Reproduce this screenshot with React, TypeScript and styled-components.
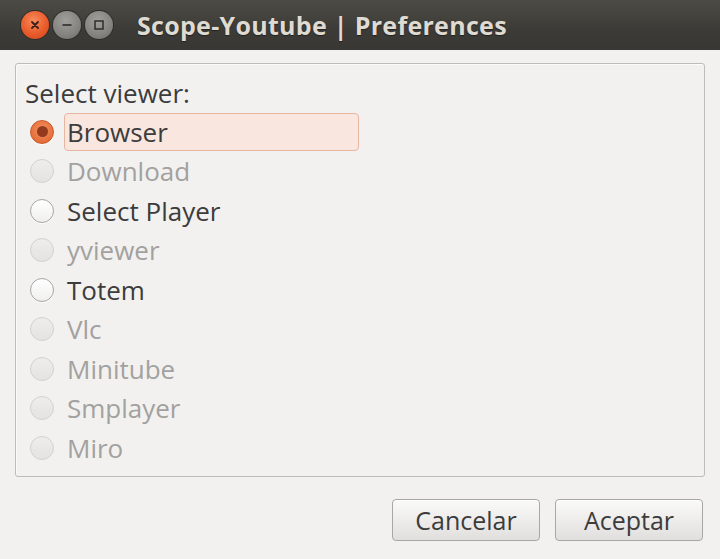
import styled, { createGlobalStyle } from 'styled-components';

const GlobalStyle = createGlobalStyle`
  html, body {
    margin: 0;
    padding: 0;
    background: #f2f1f0;
  }
  body {
    font-family: 'Open Sans', 'Noto Sans', sans-serif;
  }
`;

const Window = styled.div`
  width: 720px;
  height: 559px;
  display: flex;
  flex-direction: column;
  background: #f2f1f0;
  overflow: hidden;
`;

const TitleBar = styled.div`
  height: 50px;
  flex-shrink: 0;
  display: flex;
  align-items: center;
  padding-left: 21px;
  background: linear-gradient(#4c4b46, #3c3b37 60%, #383733);
  box-sizing: border-box;
`;

const WinButtons = styled.div`
  display: flex;
  align-items: center;
  gap: 4px;
`;

const WinButton = styled.div<{ $close?: boolean }>`
  width: 28px;
  height: 28px;
  border-radius: 50%;
  display: flex;
  align-items: center;
  justify-content: center;
  background: ${(p) =>
    p.$close
      ? 'radial-gradient(circle at 45% 35%, #f88a5c, #e95b2a 55%, #c8451c)'
      : 'radial-gradient(circle at 45% 35%, #a19f9a, #858380 60%, #6b6966)'};
  box-shadow: 0 0 0 1px #2d2c29;
`;

const Title = styled.div`
  margin-left: 24px;
  font-size: 25px;
  font-weight: 700;
  color: #dfdbd2;
  letter-spacing: 0.3px;
  text-shadow: 0 1px 1px #222;
`;

const Body = styled.div`
  flex: 1;
  display: flex;
  flex-direction: column;
  padding: 13px 15px 0 15px;
`;

const Frame = styled.div`
  border: 1px solid #bdbcb9;
  border-radius: 3px;
  box-shadow: inset 1px 1px 0 #fbfbfa;
  padding: 14px 0 9px 9px;
  height: 414px;
  box-sizing: border-box;
`;

const Heading = styled.div`
  font-size: 26px;
  line-height: 30px;
  color: #3c3c3c;
`;

const List = styled.div`
  margin-top: 4px;
  display: flex;
  flex-direction: column;
`;

const Row = styled.div`
  height: 39.5px;
  display: flex;
  align-items: center;
  padding-left: 5px;
`;

const Radio = styled.div<{ $checked?: boolean; $disabled?: boolean }>`
  width: 24px;
  height: 24px;
  box-sizing: border-box;
  border-radius: 50%;
  flex-shrink: 0;
  display: flex;
  align-items: center;
  justify-content: center;
  border: 1px solid
    ${(p) => (p.$checked ? '#c9592a' : p.$disabled ? '#d2d1ce' : '#a7a6a3')};
  background: ${(p) =>
    p.$checked
      ? 'radial-gradient(circle at 50% 40%, #f4915f, #e46f3b 70%, #d3602f)'
      : p.$disabled
        ? 'linear-gradient(#eeedec, #e4e3e1)'
        : 'linear-gradient(#ffffff, #f0efee)'};
  box-shadow: ${(p) => (p.$disabled ? 'none' : '0 1px 0 #fbfbfa')};
`;

const Dot = styled.div`
  width: 11px;
  height: 11px;
  border-radius: 50%;
  background: #93391e;
`;

const Label = styled.div<{ $focused?: boolean; $disabled?: boolean }>`
  margin-left: 10px;
  height: 38px;
  box-sizing: border-box;
  display: flex;
  align-items: center;
  padding-left: 2px;
  width: 295px;
  border: 1px solid ${(p) => (p.$focused ? '#e6b6a1' : 'transparent')};
  border-radius: 4px;
  background: ${(p) => (p.$focused ? '#f9e6df' : 'transparent')};
  font-size: 26px;
  color: ${(p) => (p.$disabled ? '#a2a19f' : '#3c3c3c')};
`;

const Footer = styled.div`
  display: flex;
  justify-content: flex-end;
  gap: 15px;
  padding: 22px 2px 0 0;
`;

const Button = styled.button`
  width: 148px;
  height: 42px;
  border: 1px solid #a8a7a4;
  border-radius: 4px;
  background: linear-gradient(#fafaf9, #ebeae8 60%, #e0dfdd);
  box-shadow: inset 0 1px 0 #ffffff;
  font-family: 'Open Sans', 'Noto Sans', sans-serif;
  font-size: 25px;
  color: #3c3c3c;
  padding: 0;
`;

const options: { name: string; disabled?: boolean; checked?: boolean }[] = [
  { name: 'Browser', checked: true },
  { name: 'Download', disabled: true },
  { name: 'Select Player' },
  { name: 'yviewer', disabled: true },
  { name: 'Totem' },
  { name: 'Vlc', disabled: true },
  { name: 'Minitube', disabled: true },
  { name: 'Smplayer', disabled: true },
  { name: 'Miro', disabled: true },
];

export default function App() {
  return (
    <>
      <GlobalStyle />
      <Window>
        <TitleBar>
          <WinButtons>
            <WinButton $close>
              <svg width="10" height="10" viewBox="0 0 10 10">
                <path d="M2 2 L8 8 M8 2 L2 8" stroke="#3a2018" strokeWidth="1.8" strokeLinecap="round" />
              </svg>
            </WinButton>
            <WinButton>
              <svg width="12" height="12" viewBox="0 0 12 12">
                <path d="M1.5 6 H10.5" stroke="#2e2d2a" strokeWidth="1.6" />
              </svg>
            </WinButton>
            <WinButton>
              <svg width="12" height="12" viewBox="0 0 12 12">
                <rect x="2" y="2" width="8" height="8" fill="none" stroke="#2e2d2a" strokeWidth="1.5" />
              </svg>
            </WinButton>
          </WinButtons>
          <Title>Scope-Youtube | Preferences</Title>
        </TitleBar>
        <Body>
          <Frame>
            <Heading>Select viewer:</Heading>
            <List>
              {options.map((o) => (
                <Row key={o.name}>
                  <Radio $checked={o.checked} $disabled={o.disabled}>
                    {o.checked && <Dot />}
                  </Radio>
                  <Label $focused={o.checked} $disabled={o.disabled}>
                    {o.name}
                  </Label>
                </Row>
              ))}
            </List>
          </Frame>
          <Footer>
            <Button>Cancelar</Button>
            <Button>Aceptar</Button>
          </Footer>
        </Body>
      </Window>
    </>
  );
}
